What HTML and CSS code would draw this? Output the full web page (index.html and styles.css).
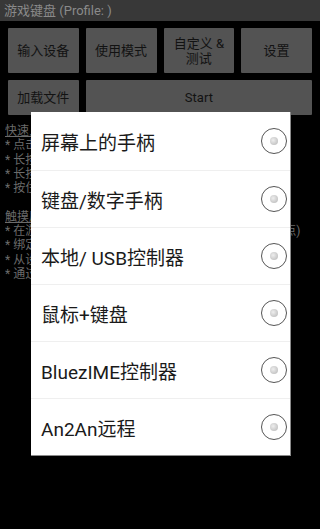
FILE: index.html
```html
<!DOCTYPE html>
<html lang="zh-CN">

<head>
    <meta charset="UTF-8">
    <meta name="viewport" content="width=device-width, initial-scale=1">
    <title>游戏键盘</title>
    <link rel="stylesheet" href="styles.css">
</head>

<body>
    <div class="title-bar">游戏键盘 (Profile: )</div>

    <div class="main">
        <div class="btn-grid">
            <button class="btn">输入设备</button>
            <button class="btn">使用模式</button>
            <button class="btn">自定义 &amp;<br>测试</button>
            <button class="btn">设置</button>
            <button class="btn btn-short">加载文件</button>
            <button class="btn btn-short btn-start">Start</button>
        </div>

        <div class="help">
            <p class="help-title">快速入门</p>
            <p>* 点击 "输入设备" 选择游戏手柄类型</p>
            <p>* 长按按钮可以查看更多的帮助信息</p>
            <p>* 长按 "Start" 可以直接进入测试模式</p>
            <p>* 按住返回键可以退出当前的按键映射</p>
            <p class="help-gap"></p>
            <p class="help-title">触摸屏</p>
            <p>* 在游戏中使用屏幕上的虚拟按键代替实体手柄 (触摸点)</p>
            <p>* 绑定按键到屏幕上的任意位置</p>
            <p>* 从设置中调整虚拟手柄的透明度</p>
            <p>* 通过自定义模式修改按键的布局</p>
        </div>
    </div>

    <div class="dialog">
        <div class="dialog-item">
            <span>屏幕上的手柄</span>
            <span class="radio"></span>
        </div>
        <div class="dialog-item">
            <span>键盘/数字手柄</span>
            <span class="radio"></span>
        </div>
        <div class="dialog-item">
            <span>本地/ USB控制器</span>
            <span class="radio"></span>
        </div>
        <div class="dialog-item">
            <span>鼠标+键盘</span>
            <span class="radio"></span>
        </div>
        <div class="dialog-item">
            <span>BluezIME控制器</span>
            <span class="radio"></span>
        </div>
        <div class="dialog-item">
            <span>An2An远程</span>
            <span class="radio"></span>
        </div>
    </div>
</body>

</html>
```

FILE: styles.css
```css
body {
    margin: 0;
    padding: 0;
    background-color: #000;
    font-family: Roboto, "Noto Sans CJK SC", sans-serif;
    color: #111;
    height: 529px;
    overflow: hidden;
}

.title-bar {
    height: 21px;
    line-height: 22px;
    background-color: #383838;
    color: #8a8a8a;
    font-size: 13px;
    padding-left: 4px;
}

.main {
    padding: 7px 8px 0;
}

.btn-grid {
    display: grid;
    grid-template-columns: repeat(4, 1fr);
    gap: 7px;
}

.btn {
    height: 45px;
    border: none;
    border-radius: 1px;
    background-color: #535353;
    color: #121212;
    font-family: Roboto, "Noto Sans CJK SC", sans-serif;
    font-size: 13px;
    line-height: 15px;
    padding: 0;
}

.btn-short {
    height: 35px;
}

.btn-start {
    grid-column: 2 / 5;
}

.help {
    margin-top: 9px;
    margin-left: -3px;
    color: #6b6b6b;
    font-size: 12px;
    line-height: 14.3px;
}

.help p {
    margin: 0;
    white-space: nowrap;
    overflow: hidden;
}

.help-title {
    text-decoration: underline;
}

.help-gap {
    height: 14.3px;
}

.dialog {
    position: fixed;
    left: 31px;
    top: 112px;
    width: 259px;
    background-color: #fff;
    border-right: 1px solid #8a8a8a;
    border-bottom: 1px solid #8a8a8a;
}

.dialog-item {
    height: 56px;
    display: flex;
    align-items: center;
    justify-content: space-between;
    padding: 0 3px 0 10px;
    border-top: 1px solid #efefef;
    font-size: 19px;
    color: #1a1a1a;
}

.dialog-item:first-child {
    border-top: none;
    height: 58px;
}

.radio {
    width: 24px;
    height: 24px;
    border: 1.8px solid #555;
    border-radius: 50%;
    display: flex;
    align-items: center;
    justify-content: center;
}

.radio::after {
    content: "";
    width: 8px;
    height: 8px;
    border-radius: 50%;
    background: radial-gradient(circle at 40% 40%, #eeeeee, #b5b5b5);
}
```
